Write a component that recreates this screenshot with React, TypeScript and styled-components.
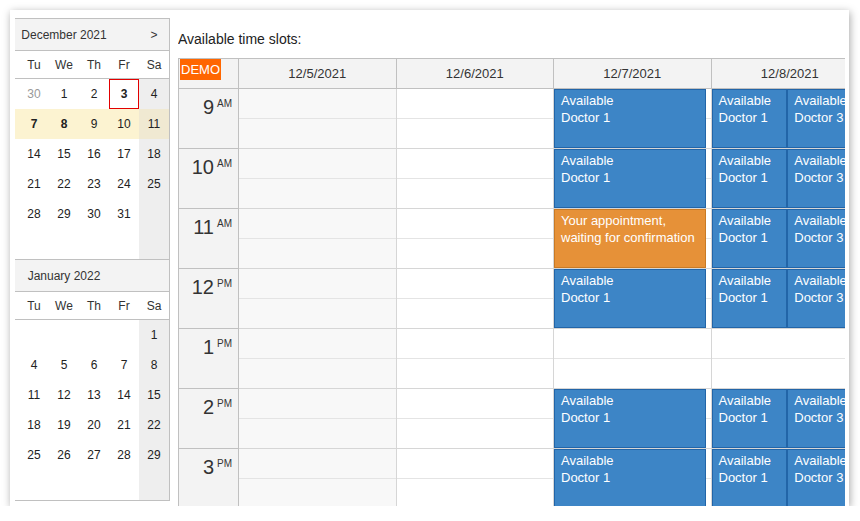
import React from 'react';
import styled, { createGlobalStyle } from 'styled-components';

type Day = { n: string; other?: boolean; bold?: boolean; selected?: boolean };
type Week = { highlight?: boolean; days: Day[] };
type Slot = { text: string[]; mine?: boolean };

// "30~" = other month, "7*" = bold, "3!" = selected
const week = (s: string, highlight = false): Week => ({
    highlight,
    days: s.split(' ').map((t) => ({
        n: t.replace(/[~*!_]/g, ''),
        other: t.endsWith('~'),
        bold: t.endsWith('*') || t.endsWith('!'),
        selected: t.endsWith('!'),
    })),
});

const EMPTY = '_ _ _ _ _';

const months = [
    {
        title: 'December 2021',
        next: true,
        weeks: [
            week('30~ 1 2 3! 4'),
            week('7* 8* 9 10 11', true),
            week('14 15 16 17 18'),
            week('21 22 23 24 25'),
            week('28 29 30 31 _'),
            week(EMPTY),
        ],
    },
    {
        title: 'January 2022',
        next: false,
        weeks: [
            week('_ _ _ _ 1'),
            week('4 5 6 7 8'),
            week('11 12 13 14 15'),
            week('18 19 20 21 22'),
            week('25 26 27 28 29'),
            week(EMPTY),
        ],
    },
];

const dayNames = ['Tu', 'We', 'Th', 'Fr', 'Sa'];

const hours = [
    ['9', 'AM'],
    ['10', 'AM'],
    ['11', 'AM'],
    ['12', 'PM'],
    ['1', 'PM'],
    ['2', 'PM'],
    ['3', 'PM'],
];

const dr1: Slot = { text: ['Available', 'Doctor 1'] };
const dr3: Slot = { text: ['Available', 'Doctor 3'] };
const mine: Slot = { text: ['Your appointment, waiting for confirmation'], mine: true };

const columns: { date: string; shaded?: boolean; slots: Slot[][] }[] = [
    { date: '12/5/2021', shaded: true, slots: [[], [], [], [], [], [], []] },
    { date: '12/6/2021', slots: [[], [], [], [], [], [], []] },
    { date: '12/7/2021', slots: [[dr1], [dr1], [mine], [dr1], [], [dr1], [dr1]] },
    { date: '12/8/2021', slots: [[dr1, dr3], [dr1, dr3], [dr1, dr3], [dr1, dr3], [], [dr1, dr3], [dr1, dr3]] },
];

export default function App() {
    return (
        <>
            <GlobalStyle />
            <Frame>
                <Nav>
                    {months.map((m) => (
                        <Month key={m.title}>
                            <MonthHeader>
                                <MonthTitle>{m.title}</MonthTitle>
                                {m.next && <NavArrow>&gt;</NavArrow>}
                            </MonthHeader>
                            <DayNames>
                                <span />
                                {dayNames.map((d) => (
                                    <DayName key={d}>{d}</DayName>
                                ))}
                            </DayNames>
                            {m.weeks.map((w, i) => (
                                <WeekRow key={i} $highlight={w.highlight}>
                                    <span />
                                    {w.days.map((d, j) => (
                                        <DayCell
                                            key={j}
                                            $weekend={j === 4}
                                            $highlight={w.highlight}
                                            $other={d.other}
                                            $bold={d.bold}
                                            $selected={d.selected}
                                        >
                                            {d.n}
                                        </DayCell>
                                    ))}
                                </WeekRow>
                            ))}
                        </Month>
                    ))}
                </Nav>

                <Main>
                    <Title>Available time slots:</Title>
                    <Scheduler>
                        <Corner>
                            <Demo>DEMO</Demo>
                        </Corner>
                        {columns.map((c) => (
                            <ColHeader key={c.date}>{c.date}</ColHeader>
                        ))}
                        {hours.map(([h, ap], hi) => (
                            <React.Fragment key={h}>
                                <TimeCell>
                                    <Hour>{h}</Hour>
                                    <AmPm>{ap}</AmPm>
                                </TimeCell>
                                {columns.map((c) => (
                                    <Cell key={c.date} $shaded={c.shaded}>
                                        {c.slots[hi].map((s, k) => (
                                            <Event key={k} $mine={s.mine}>
                                                {s.text.map((t) => (
                                                    <div key={t}>{t}</div>
                                                ))}
                                            </Event>
                                        ))}
                                    </Cell>
                                ))}
                            </React.Fragment>
                        ))}
                    </Scheduler>
                </Main>
            </Frame>
        </>
    );
}

const GlobalStyle = createGlobalStyle`
    html, body {
        margin: 0;
        padding: 0;
        background: #fff;
    }
    body {
        font-family: "Liberation Sans", Arial, sans-serif;
        color: #333;
    }
`

const Frame = styled.div`
    box-sizing: border-box;
    margin: 10px 0 0 10px;
    width: 839px;
    height: 496px;
    padding: 8px 4px 0 5px;
    background: #fff;
    box-shadow: 1px 2px 8px rgba(0, 0, 0, 0.35);
    display: flex;
    gap: 8px;
    overflow: hidden;
`

const Nav = styled.div`
    flex: none;
    box-sizing: border-box;
    width: 155px;
    align-self: flex-start;
    border-right: 1px solid #c0c0c0;
    border-bottom: 1px solid #c0c0c0;
    font-size: 12px;
`

const Month = styled.div`
    border-top: 1px solid #c0c0c0;
`

const MonthHeader = styled.div`
    display: flex;
    align-items: center;
    height: 31px;
    background: #f3f3f3;
    border-bottom: 1px solid #c0c0c0;
`

const MonthTitle = styled.div`
    width: 98px;
    text-align: center;
`

const NavArrow = styled.div`
    margin-left: auto;
    width: 30px;
    text-align: center;
`

const DayNames = styled.div`
    display: grid;
    grid-template-columns: 4px repeat(5, 30px);
    height: 27px;
    align-items: center;
    border-bottom: 1px solid #c0c0c0;
`

const DayName = styled.div`
    text-align: center;
`

const WeekRow = styled.div<{ $highlight?: boolean }>`
    display: grid;
    grid-template-columns: 4px repeat(5, 30px);
    height: 30px;
    background: ${(p) => (p.$highlight ? '#fcf3d1' : '#fff')};
`

const DayCell = styled.div<{
    $weekend?: boolean;
    $highlight?: boolean;
    $other?: boolean;
    $bold?: boolean;
    $selected?: boolean;
}>`
    box-sizing: border-box;
    display: flex;
    align-items: center;
    justify-content: center;
    background: ${(p) => (p.$weekend ? (p.$highlight ? '#f0e9d2' : '#eeeeee') : 'transparent')};
    color: ${(p) => (p.$other ? '#999' : '#222')};
    font-weight: ${(p) => (p.$bold ? 700 : 400)};
    border: 1px solid ${(p) => (p.$selected ? '#e20000' : 'transparent')};
`

const Main = styled.div`
    flex: none;
    width: 667px;
    display: flex;
    flex-direction: column;
    overflow: hidden;
`

const Title = styled.div`
    font-size: 14px;
    line-height: 18px;
    padding: 12px 0 10px;
    color: #222;
`

const Scheduler = styled.div`
    display: grid;
    grid-template-columns: 60px repeat(4, 157.5px);
    grid-template-rows: 30px;
    grid-auto-rows: 60px;
    border-top: 1px solid #c0c0c0;
    border-left: 1px solid #c0c0c0;
    overflow: hidden;
`

const Corner = styled.div`
    box-sizing: border-box;
    display: flex;
    align-items: flex-start;
    padding-left: 1px;
    background: #f3f3f3;
    border-right: 1px solid #c0c0c0;
    border-bottom: 1px solid #c0c0c0;
`

const Demo = styled.span`
    background: #ff6600;
    color: #fff;
    font-size: 13px;
    line-height: 21px;
    padding: 0 1px;
`

const ColHeader = styled.div`
    box-sizing: border-box;
    display: flex;
    align-items: center;
    justify-content: center;
    background: #f3f3f3;
    border-right: 1px solid #c0c0c0;
    border-bottom: 1px solid #c0c0c0;
    font-size: 13px;
`

const TimeCell = styled.div`
    box-sizing: border-box;
    display: flex;
    justify-content: flex-end;
    align-items: flex-start;
    padding: 6px 6px 0 0;
    background: #f3f3f3;
    border-right: 1px solid #c0c0c0;
    border-bottom: 1px solid #c0c0c0;
`

const Hour = styled.span`
    font-size: 20px;
    line-height: 24px;
`

const AmPm = styled.span`
    font-size: 10px;
    line-height: 12px;
    margin: 3px 0 0 3px;
`

const Cell = styled.div<{ $shaded?: boolean }>`
    box-sizing: border-box;
    display: flex;
    padding-right: 5px;
    background-color: ${(p) => (p.$shaded ? '#f8f8f8' : '#fff')};
    background-image: linear-gradient(
        to bottom,
        transparent 29px,
        #e4e4e4 29px,
        #e4e4e4 30px,
        transparent 30px
    );
    border-right: 1px solid #d6d6d6;
    border-bottom: 1px solid #d6d6d6;
`

const Event = styled.div<{ $mine?: boolean }>`
    flex: 1;
    min-width: 0;
    box-sizing: border-box;
    padding: 2px 6px;
    overflow: hidden;
    background: ${(p) => (p.$mine ? '#e69138' : '#3d85c6')};
    border: 1px solid ${(p) => (p.$mine ? '#c97a24' : '#2265a8')};
    color: #fff;
    font-size: 13px;
    line-height: 17px;
    white-space: nowrap;

    & > div {
        white-space: ${(p) => (p.$mine ? 'normal' : 'nowrap')};
    }
`
